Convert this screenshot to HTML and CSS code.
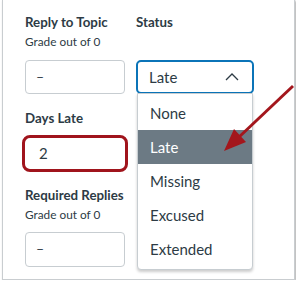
FILE: index.html
```html
<!DOCTYPE html>
<html lang="en">
<head>
  <meta charset="UTF-8" />
  <title>Grade Options</title>
  <link rel="stylesheet" href="styles.css">
</head>
<body>
  <div class="card">
    <div class="top-grid">
      <div class="label">Reply to Topic</div>
      <div class="label">Status</div>
      <div class="sub">Grade out of 0</div>
      <div></div>
      <div class="field">–</div>
      <div class="status-wrap">
        <div class="select">
          <span>Late</span>
          <svg class="chevron" width="14" height="8" viewBox="0 0 14 8">
            <path d="M1 7 L7 1 L13 7" fill="none" stroke="#2d3b45" stroke-width="1.3" />
          </svg>
        </div>
        <ul class="options">
          <li>None</li>
          <li class="active">Late</li>
          <li>Missing</li>
          <li>Excused</li>
          <li>Extended</li>
        </ul>
      </div>
    </div>

    <div class="label days">Days Late</div>
    <div class="field days-input">2</div>

    <div class="label replies">Required Replies</div>
    <div class="sub">Grade out of 0</div>
    <div class="field last">–</div>
  </div>

  <svg class="arrow" width="296" height="285" viewBox="0 0 296 285">
    <line x1="293" y1="86" x2="238" y2="138" stroke="#a3161c" stroke-width="3" />
    <polygon points="224,151 234,129 246,142" fill="#a3161c" />
  </svg>
</body>
</html>
```

FILE: styles.css
```css
body {
  margin: 0;
  background: #fff;
  font-family: Lato, "Open Sans", sans-serif;
  color: #2d3b45;
}

.card {
  width: 269px;
  margin-left: 2px;
  padding: 12px 0 12px 22px;
  border: 1px solid #c9cdd0;
  border-top: none;
  box-shadow: 1px 1px 2px rgba(0, 0, 0, 0.35);
}

.top-grid {
  display: grid;
  grid-template-columns: 100px 118px;
  column-gap: 11px;
  align-items: start;
}

.label {
  font-size: 13.3px;
  font-weight: bold;
  line-height: 20px;
}

.sub {
  font-size: 11.8px;
  line-height: 16px;
  margin-top: 2px;
}

.field {
  box-sizing: border-box;
  width: 100px;
  height: 34px;
  margin-top: 10px;
  padding-left: 10px;
  border: 1px solid #c7cdd1;
  border-radius: 4px;
  font-size: 14px;
  line-height: 32px;
}

.status-wrap {
  position: relative;
  margin-top: 10px;
}

.select {
  box-sizing: border-box;
  height: 34px;
  display: flex;
  align-items: center;
  justify-content: space-between;
  padding: 0 13px 0 11px;
  border: 2px solid #0b74b8;
  border-radius: 5px;
  font-size: 15px;
}

.chevron {
  margin-top: -1px;
}

.options {
  position: absolute;
  top: 33px;
  left: 1px;
  width: 116px;
  box-sizing: border-box;
  margin: 0;
  padding: 2px 0 3px;
  list-style: none;
  background: #fff;
  border: 1px solid #c7cdd1;
  border-radius: 0 0 4px 4px;
  box-shadow: 0 2px 3px rgba(0, 0, 0, 0.2);
}

.options li {
  height: 34px;
  line-height: 34px;
  padding-left: 12px;
  font-size: 15px;
}

.options li.active {
  background: #6c7a84;
  color: #fff;
}

.days {
  margin-top: 14px;
}

.days-input {
  width: 106px;
  height: 37px;
  margin: 7px 0 0 -3px;
  padding-left: 14px;
  border: 3px solid #a0141c;
  border-radius: 8px;
  font-size: 15px;
  line-height: 31px;
}

.replies {
  margin-top: 13px;
}

.last {
  height: 35px;
  margin-top: 9px;
}

.arrow {
  position: absolute;
  top: 0;
  left: 0;
  pointer-events: none;
}
```
